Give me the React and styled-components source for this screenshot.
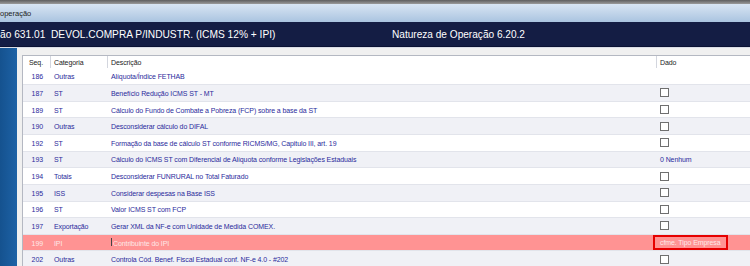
import React from "react";
import styled, { createGlobalStyle } from "styled-components";

const GlobalStyle = createGlobalStyle`
  html, body {
    margin: 0;
    padding: 0;
    background: #f0f0f0;
  }
  body {
    font-family: "Liberation Sans", Arial, sans-serif;
    overflow: hidden;
  }
`;

const Window = styled.div`
  width: 750px;
  height: 266px;
  display: flex;
  flex-direction: column;
  overflow: hidden;
  background: #f0f0f0;
`;

const TopEdge = styled.div`
  height: 4px;
  background: linear-gradient(#5e5e5e, #9a9a9a);
`;

const TitleBar = styled.div`
  height: 18px;
  display: flex;
  align-items: center;
  font-size: 7.5px;
  color: #1c1c1c;
  background: linear-gradient(#d8e5f3, #aac4e0);
`;

const Banner = styled.div`
  height: 24px;
  display: flex;
  align-items: center;
  background: #141d44;
  border-bottom: 1px solid #0b1233;
  color: #ffffff;
  font-size: 10.2px;
  white-space: pre;
`;

const BannerLeft = styled.span`
  width: 392px;
  flex: none;
`;

const BannerRight = styled.span`
  font-size: 10.1px;
`;

const Body = styled.div`
  flex: 1;
  display: flex;
  border-top: 1px solid #d9dde6;
  min-height: 0;
`;

const SideStrip = styled.div`
  width: 17px;
  flex: none;
  background: linear-gradient(90deg, #15528f, #1d62a6);
`;

const Content = styled.div`
  flex: 1;
  padding: 7px 0 0 5px;
  overflow: hidden;
  background: #f0f0f0;
`;

const Table = styled.div`
  width: 800px;
  background: #ffffff;
  border-top: 1px solid #b4b8c2;
  border-left: 1px solid #b4b8c2;
  font-size: 7px;
  letter-spacing: -0.1px;
`;

const Row = styled.div`
  display: grid;
  grid-template-columns: 28px 57px 549px 1fr;
  height: ${(p) => (p.$head ? "12.5px" : "16.64px")};
  align-items: center;
  background: ${(p) =>
    p.$selected ? "#ff9393" : p.$alt ? "#f0f1f6" : "#ffffff"};
  border-bottom: 1px solid ${(p) => (p.$head ? "transparent" : "#e2e4eb")};
  box-sizing: border-box;
  color: ${(p) => (p.$head ? "#222222" : p.$selected ? "#fde8e8" : "#2a2a9c")};
`;

const Cell = styled.div`
  height: 100%;
  display: flex;
  align-items: center;
  white-space: nowrap;
  box-sizing: border-box;
  justify-content: ${(p) => (p.$right ? "flex-end" : "flex-start")};
  padding: ${(p) => (p.$right ? "1px 7px 0 0" : "1px 0 0 3px")};
  border-right: 1px solid ${(p) => (p.$line ? "#d3d6de" : "transparent")};
`;

const HeadCell = styled(Cell)`
  align-items: flex-start;
  padding-top: 3px;
`;

const Checkbox = styled.span`
  width: 7px;
  height: 7px;
  border: 1px solid #6f6f6f;
  background: #ffffff;
  display: inline-block;
  margin-top: -1px;
`;

const ValueBox = styled.span`
  height: 100%;
  box-sizing: border-box;
  display: flex;
  align-items: center;
  border: 2px solid #e60000;
  padding: 0 6px 0 5px;
  margin: -1px 0 0 -7px;
  height: calc(100% + 1px);
  color: #fde8e8;
`;

const Caret = styled.span`
  width: 1px;
  height: 8px;
  background: #444444;
  margin-right: 1px;
  align-self: flex-start;
  margin-top: 2px;
`;

const rows = [
  { seq: 186, cat: "Outras", desc: "Alíquota/Índice FETHAB", dado: null },
  { seq: 187, cat: "ST", desc: "Benefício Redução ICMS ST - MT", dado: "check" },
  {
    seq: 189,
    cat: "ST",
    desc: "Cálculo do Fundo de Combate a Pobreza (FCP) sobre a base da ST",
    dado: "check",
  },
  { seq: 190, cat: "Outras", desc: "Desconsiderar cálculo do DIFAL", dado: "check" },
  {
    seq: 192,
    cat: "ST",
    desc: "Formação da base de cálculo ST conforme RICMS/MG, Capitulo III, art. 19",
    dado: "check",
  },
  {
    seq: 193,
    cat: "ST",
    desc: "Cálculo do ICMS ST com Diferencial de Alíquota conforme Legislações Estaduais",
    dado: "0 Nenhum",
  },
  { seq: 194, cat: "Totais", desc: "Desconsiderar FUNRURAL no Total Faturado", dado: "check" },
  { seq: 195, cat: "ISS", desc: "Considerar despesas na Base ISS", dado: "check" },
  { seq: 196, cat: "ST", desc: "Valor ICMS ST com FCP", dado: "check" },
  {
    seq: 197,
    cat: "Exportação",
    desc: "Gerar XML da NF-e com Unidade de Medida COMEX.",
    dado: "check",
  },
  {
    seq: 199,
    cat: "IPI",
    desc: "Contribuinte do IPI",
    dado: "cfme. Tipo Empresa",
    selected: true,
  },
  {
    seq: 202,
    cat: "Outras",
    desc: "Controla Cód. Benef. Fiscal Estadual conf. NF-e 4.0 - #202",
    dado: "check",
  },
];

const renderDado = (row) => {
  if (row.dado === "check") return <Checkbox />;
  if (row.selected) return <ValueBox>{row.dado}</ValueBox>;
  return row.dado;
};

export default function App() {
  return (
    <>
      <GlobalStyle />
      <Window>
        <TopEdge />
        <TitleBar>operação</TitleBar>
        <Banner>
          <BannerLeft>ão 631.01  DEVOL.COMPRA P/INDUSTR. (ICMS 12% + IPI)</BannerLeft>
          <BannerRight>Natureza de Operação 6.20.2</BannerRight>
        </Banner>
        <Body>
          <SideStrip />
          <Content>
            <Table>
              <Row $head>
                <HeadCell $right $line>Seq.</HeadCell>
                <HeadCell $line>Categoria</HeadCell>
                <HeadCell $line>Descrição</HeadCell>
                <HeadCell>Dado</HeadCell>
              </Row>
              {rows.map((row, i) => (
                <Row key={row.seq} $alt={i % 2 === 1} $selected={row.selected}>
                  <Cell $right>{row.seq}</Cell>
                  <Cell>{row.cat}</Cell>
                  <Cell>
                    {row.selected && <Caret />}
                    {row.desc}
                  </Cell>
                  <Cell>{renderDado(row)}</Cell>
                </Row>
              ))}
            </Table>
          </Content>
        </Body>
      </Window>
    </>
  );
}
